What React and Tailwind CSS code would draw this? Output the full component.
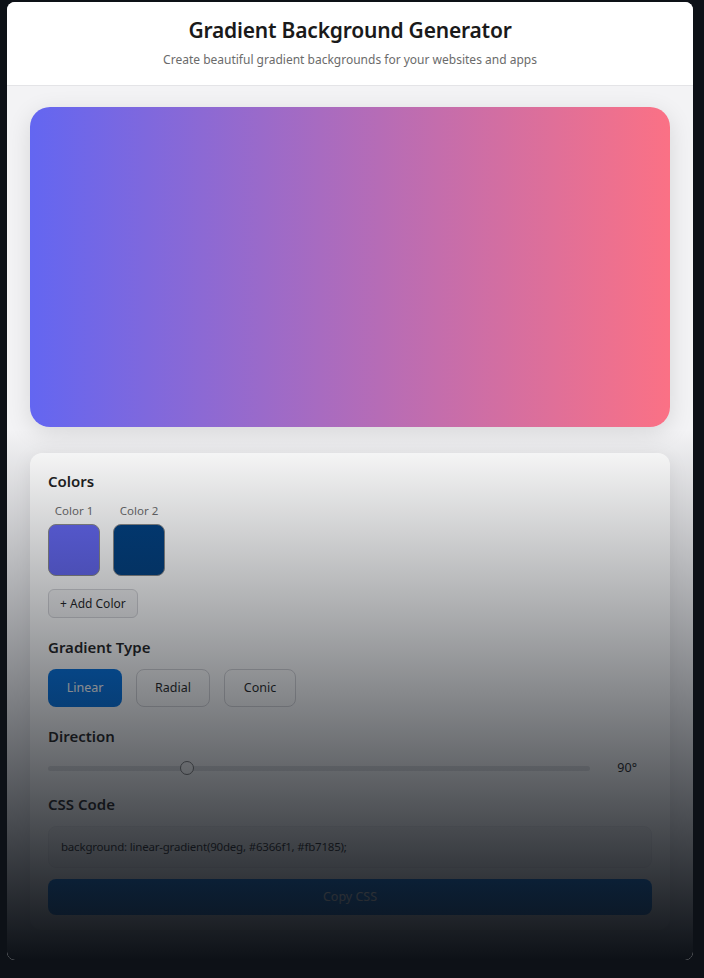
import React from 'react';

const types = [
  ['Linear', 'w-[74px]'],
  ['Radial', 'w-[74px]'],
  ['Conic', 'w-[72px]'],
];

const Heading = ({ children }) => (
  <h2 className="text-[15px] font-semibold text-[#1f1f1f] leading-none">{children}</h2>
);

export default function App() {
  return (
    <div className="min-h-[978px] bg-[#0d1117] pt-[2px] px-[7px] pb-[20px] font-['Noto_Sans',sans-serif]">
      <div className="relative w-[686px] rounded-lg overflow-hidden bg-[#f3f3f5]">
        {/* Header */}
        <header className="bg-white border-b border-[#e4e4e7] h-[84px] flex flex-col items-center pt-[13px]">
          <h1 className="text-[21px] font-semibold text-[#1a1a1a] leading-[30px] tracking-[-0.2px]">
            Gradient Background Generator
          </h1>
          <p className="text-[12px] text-[#6b6b6b] mt-[7px] leading-4">
            Create beautiful gradient backgrounds for your websites and apps
          </p>
        </header>

        <main className="px-[23px] pt-[21px] pb-[30px] flex flex-col gap-[26px]">
          {/* Preview */}
          <div className="h-[320px] rounded-[20px] bg-[linear-gradient(90deg,#6366f1,#fb7185)] shadow-[0_6px_24px_rgba(0,0,0,0.12)]" />

          {/* Controls */}
          <section className="bg-white rounded-xl shadow-[0_4px_20px_rgba(0,0,0,0.08)] px-[18px] pt-[21px] pb-[15px] flex flex-col">
            <Heading>Colors</Heading>
            <div className="flex gap-[13px] mt-[14px]">
              {[
                ['Color 1', 'bg-[#6366f1]'],
                ['Color 2', 'bg-[#003f80]'],
              ].map(([label, bg]) => (
                <div key={label} className="flex flex-col items-center">
                  <span className="text-[11.5px] text-[#6b6b6b] leading-4">{label}</span>
                  <div className={`mt-[5px] w-[52px] h-[52px] rounded-lg border border-[#8a8a8a] ${bg}`} />
                </div>
              ))}
            </div>
            <button className="self-start mt-[13px] h-[29px] px-[11px] rounded-md border border-[#d4d4d8] bg-[#f4f4f5] text-[12px] text-[#1f1f1f]">
              + Add Color
            </button>

            <div className="mt-[22px]">
              <Heading>Gradient Type</Heading>
            </div>
            <div className="flex gap-[14px] mt-[14px]">
              {types.map(([t, w], i) => (
                <button
                  key={t}
                  className={
                    i === 0
                      ? `h-[38px] ${w} rounded-lg bg-[#0070e0] text-white text-[12.5px]`
                      : `h-[38px] ${w} rounded-lg border border-[#d4d4d8] text-[#1f1f1f] text-[12.5px]`
                  }
                >
                  {t}
                </button>
              ))}
            </div>

            <div className="mt-[22px]">
              <Heading>Direction</Heading>
            </div>
            <div className="flex items-center mt-[16px] h-[16px]">
              <div className="relative flex-1 h-[5px] rounded-full bg-[#e2e3e6]">
                <div className="absolute left-[132px] top-1/2 -translate-y-1/2 w-[14px] h-[14px] rounded-full bg-white border border-[#7a7a7a]" />
              </div>
              <span className="w-[62px] text-right pr-[15px] text-[12.5px] text-[#1f1f1f]">90°</span>
            </div>

            <div className="mt-[21px]">
              <Heading>CSS Code</Heading>
            </div>
            <div className="mt-[14px] h-[42px] rounded-lg bg-[#f6f6f7] border border-[#ececef] flex items-center px-[12px] text-[11.5px] text-[#1f1f1f] tracking-[-0.2px]">
              background: linear-gradient(90deg, #6366f1, #fb7185);
            </div>
            <button className="mt-[11px] h-[36px] rounded-lg bg-[#0070e0] text-white text-[12.5px]">Copy CSS</button>
          </section>
        </main>

        {/* Fade overlay */}
        <div className="pointer-events-none absolute inset-x-0 top-[428px] bottom-0 bg-[linear-gradient(to_bottom,rgba(13,17,23,0),rgba(13,17,23,1))]" />
      </div>
    </div>
  );
}
